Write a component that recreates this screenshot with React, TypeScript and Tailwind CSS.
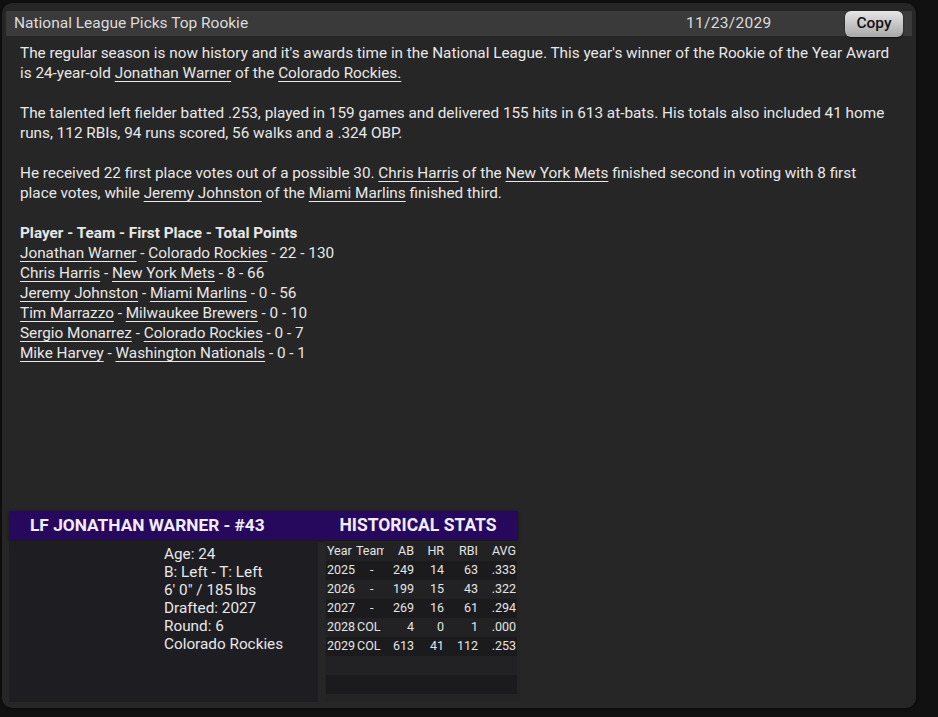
import React from "react";

type Part = string | { link: string } | { br: true };

const L = (t: string): Part => ({ link: t });
const BR: Part = { br: true };

function Line({ parts }: { parts: Part[] }) {
  return (
    <>
      {parts.map((p, i) =>
        typeof p === "string" ? (
          <span key={i}>{p}</span>
        ) : "br" in p ? (
          <br key={i} />
        ) : (
          <span key={i} className="underline underline-offset-[3px]">
            {p.link}
          </span>
        )
      )}
    </>
  );
}

const voting: Part[][] = [
  [L("Jonathan Warner"), " - ", L("Colorado Rockies"), " - 22 - 130"],
  [L("Chris Harris"), " - ", L("New York Mets"), " - 8 - 66"],
  [L("Jeremy Johnston"), " - ", L("Miami Marlins"), " - 0 - 56"],
  [L("Tim Marrazzo"), " - ", L("Milwaukee Brewers"), " - 0 - 10"],
  [L("Sergio Monarrez"), " - ", L("Colorado Rockies"), " - 0 - 7"],
  [L("Mike Harvey"), " - ", L("Washington Nationals"), " - 0 - 1"],
];

const stats = [
  ["2025", "-", "249", "14", "63", ".333"],
  ["2026", "-", "199", "15", "43", ".322"],
  ["2027", "-", "269", "16", "61", ".294"],
  ["2028", "COL", "4", "0", "1", ".000"],
  ["2029", "COL", "613", "41", "112", ".253"],
];

function StatRow({ cells, dark }: { cells: string[]; dark: boolean }) {
  return (
    <div
      className={`flex h-[19px] items-center ${dark ? "bg-[#1b1b1e]" : "bg-[#222225]"}`}
    >
      <div className="w-[30px] pl-[1px]">{cells[0]}</div>
      <div className={`w-[28px] overflow-hidden whitespace-nowrap ${cells[1] === "-" ? "pl-[14px]" : "pl-[1px]"}`}>
        {cells[1]}
      </div>
      <div className="w-[30px] text-right">{cells[2]}</div>
      <div className="w-[30px] text-right">{cells[3]}</div>
      <div className="w-[34px] text-right">{cells[4]}</div>
      <div className="w-[38px] text-right">{cells[5]}</div>
    </div>
  );
}

export default function App() {
  return (
    <div
      className="w-[938px] h-[717px] bg-[#111111] overflow-hidden"
      style={{ fontFamily: "Roboto, 'Liberation Sans', sans-serif" }}
    >
      <div className="ml-[2px] mt-[3px] w-[914px] h-[705px] rounded-[10px] bg-[#262626] flex flex-col shadow-[0_0_4px_rgba(0,0,0,0.6)]">
        {/* title bar */}
        <div className="mx-[4px] mt-[8px] h-[25px] bg-[#3a3a3a] flex items-center relative">
          <div className="pl-[8px] text-[15.5px] text-[#dcdcdc] w-[680px]">
            National League Picks Top Rookie
          </div>
          <div className="text-[15.5px] tracking-[0.3px] text-[#dcdcdc] w-[130px]">11/23/2029</div>
          <button className="absolute right-[9px] top-0 h-[26px] w-[58px] rounded-[6px] bg-gradient-to-b from-[#e6e6e6] to-[#a8a8a8] text-[15.5px] font-medium text-[#111] shadow-[0_1px_2px_rgba(0,0,0,0.6)]">
            Copy
          </button>
        </div>

        {/* article */}
        <div className="flex-1 pl-[18px] pt-[7px] w-[908px] text-[15.3px] leading-[20px] text-[#e8e8e8]">
          <p>
            <Line
              parts={[
                "The regular season is now history and it's awards time in the National League. This year's winner of the Rookie of the Year Award",
                BR,
                "is 24-year-old ",
                L("Jonathan Warner"),
                " of the ",
                L("Colorado Rockies."),
              ]}
            />
          </p>
          <p className="mt-[20px]">
            The talented left fielder batted .253, played in 159 games and delivered 155 hits in 613 at-bats. His totals also included 41 home
            <br />
            runs, 112 RBIs, 94 runs scored, 56 walks and a .324 OBP.
          </p>
          <p className="mt-[20px]">
            <Line
              parts={[
                "He received 22 first place votes out of a possible 30. ",
                L("Chris Harris"),
                " of the ",
                L("New York Mets"),
                " finished second in voting with 8 first",
                BR,
                "place votes, while ",
                L("Jeremy Johnston"),
                " of the ",
                L("Miami Marlins"),
                " finished third.",
              ]}
            />
          </p>
          <div className="mt-[20px]">
            <div className="font-bold">Player - Team - First Place - Total Points</div>
            {voting.map((row, i) => (
              <div key={i}>
                <Line parts={row} />
              </div>
            ))}
          </div>
        </div>

        {/* player card */}
        <div className="ml-[7px] mb-[6px] w-[511px]">
          <div className="mr-[2px] h-[29px] bg-[#26095c] flex items-center shadow-[0_1px_3px_rgba(0,0,0,0.5)]">
            <div className="w-[309px] pl-[21px] text-[17.3px] font-bold text-[#f3ecff]">
              LF JONATHAN WARNER - #43
            </div>
            <div className="flex-1 text-center text-[17.5px] font-bold text-[#f3ecff]">
              HISTORICAL STATS
            </div>
          </div>
          <div className="flex gap-[7px] mt-[1px] h-[161px]">
            <div className="w-[309px] bg-[#1e1d22] pl-[155px] pt-[4px] text-[15.3px] leading-[18px] text-[#e8e8e8]">
              <div>Age: 24</div>
              <div>B: Left - T: Left</div>
              <div>6' 0" / 185 lbs</div>
              <div>Drafted: 2027</div>
              <div>Round: 6</div>
              <div>Colorado Rockies</div>
            </div>
            <div className="w-[195px] bg-[#242424] pl-[1px] pr-[3px] pt-[1px] pb-[7px] text-[12.5px] text-[#e4e4e4]">
              <div className="flex h-[19px] items-center bg-[#222225]">
                <div className="w-[30px] pl-[1px]">Year</div>
                <div className="w-[28px] overflow-hidden whitespace-nowrap">Team</div>
                <div className="w-[30px] text-right">AB</div>
                <div className="w-[30px] text-right">HR</div>
                <div className="w-[34px] text-right">RBI</div>
                <div className="w-[38px] text-right">AVG</div>
              </div>
              {stats.map((r, i) => (
                <StatRow key={i} cells={r} dark={i % 2 === 0} />
              ))}
              <div className="h-[19px] bg-[#222225]" />
              <div className="h-[19px] bg-[#1b1b1e]" />
            </div>
          </div>
        </div>
      </div>
    </div>
  );
}
